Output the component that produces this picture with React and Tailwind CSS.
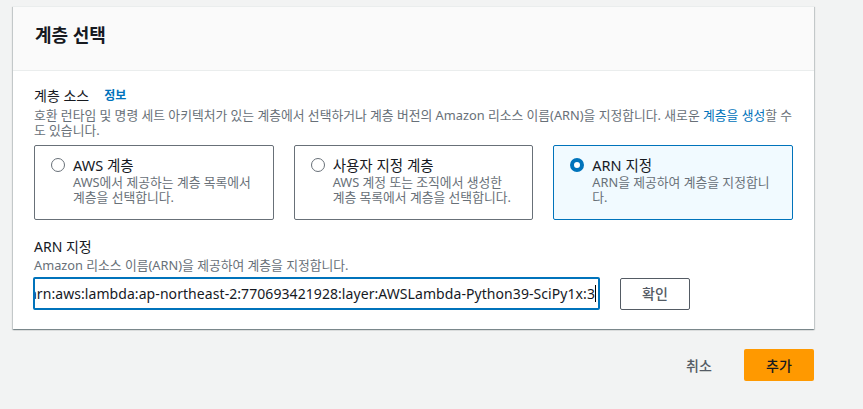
import React from 'react';

const font = { fontFamily: '"Noto Sans", "Noto Sans CJK KR", sans-serif' };

const sources = [
  { id: 'aws', title: 'AWS 계층', lines: ['AWS에서 제공하는 계층 목록에서', '계층을 선택합니다.'] },
  { id: 'custom', title: '사용자 지정 계층', lines: ['AWS 계정 또는 조직에서 생성한', '계층 목록에서 계층을 선택합니다.'] },
  { id: 'arn', title: 'ARN 지정', lines: ['ARN을 제공하여 계층을 지정합니', '다.'] },
];

function Radio({ checked }) {
  return checked ? (
    <span className="mt-[3px] block w-[14px] h-[14px] shrink-0 rounded-full border-[4px] border-[#0073bb] bg-white" />
  ) : (
    <span className="mt-[3px] block w-[14px] h-[14px] shrink-0 rounded-full border-[1.5px] border-[#687078] bg-white" />
  );
}

function SourceCard({ source, selected }) {
  return (
    <div
      className={`flex gap-[8px] pl-[16px] pr-[12px] pt-[9px] pb-[14px] rounded-[2px] border ${
        selected ? 'border-[#0073bb] bg-[#f1faff]' : 'border-[#687078] bg-white'
      }`}
    >
      <Radio checked={selected} />
      <div>
        <div className="h-[20px] text-[14.5px] leading-[20px] text-[#16191f] whitespace-nowrap">{source.title}</div>
        {source.lines.map((line) => (
          <div key={line} className="h-[15px] text-[12.8px] leading-[15px] text-[#687078] whitespace-nowrap">
            {line}
          </div>
        ))}
      </div>
    </div>
  );
}

export default function App() {
  const arn = 'arn:aws:lambda:ap-northeast-2:770693421928:layer:AWSLambda-Python39-SciPy1x:3';

  return (
    <div className="min-h-[409px] bg-[#f2f3f3] pt-[6px] pl-[13px]" style={font}>
      <div className="w-[801px] bg-white border-t border-[#eaeded] shadow-[0_1px_1px_0_rgba(0,28,36,0.3),1px_1px_1px_0_rgba(0,28,36,0.15),-1px_1px_1px_0_rgba(0,28,36,0.15)]">
        <div className="h-[64px] bg-[#fafafa] border-b border-[#eaeded] px-[22px] pt-[16px]">
          <h2 className="text-[18px] leading-[24px] font-bold text-[#16191f]">계층 선택</h2>
        </div>

        <div className="px-[21px] pt-[15px] pb-[19px]">
          <div className="h-[20px] flex items-center gap-[15px] text-[14px] leading-[20px] text-[#16191f]">
            계층 소스
            <span className="text-[12px] font-bold text-[#0073bb]">정보</span>
          </div>
          <div className="mt-[2px] text-[12.8px] leading-[15px] text-[#687078] whitespace-nowrap">
            <div className="h-[15px]">
              호환 런타임 및 명령 세트 아키텍처가 있는 계층에서 선택하거나 계층 버전의 Amazon 리소스 이름(ARN)을 지정합니다. 새로운{' '}
              <span className="text-[#0073bb]">계층을 생성</span>할 수
            </div>
            <div className="h-[15px]">도 있습니다.</div>
          </div>

          <div className="grid grid-cols-3 gap-[20px] mt-[7px]">
            {sources.map((s) => (
              <SourceCard key={s.id} source={s} selected={s.id === 'arn'} />
            ))}
          </div>

          <div className="mt-[17px] h-[20px] text-[14px] leading-[20px] text-[#16191f]">ARN 지정</div>
          <div className="mt-[1px] h-[15px] text-[12.8px] leading-[15px] text-[#687078]">
            Amazon 리소스 이름(ARN)을 제공하여 계층을 지정합니다.
          </div>

          <div className="flex items-center gap-[20px] mt-[4px] -ml-px">
            <div className="w-[567px] h-[33px] flex items-center justify-end overflow-hidden border-2 border-[#0073bb] rounded-[2px] pr-[2px] bg-white">
              <span className="whitespace-nowrap text-[14px] tracking-[0.07px] text-[#16191f]">{arn}</span>
              <span className="block w-px h-[17px] bg-black shrink-0" />
            </div>
            <button className="w-[70px] h-[32px] border border-[#545b64] rounded-[2px] text-[14px] font-medium text-[#545b64] bg-white">
              확인
            </button>
          </div>
        </div>
      </div>

      <div className="w-[801px] flex justify-end items-center mt-[20px] gap-[10px]">
        <button className="w-[70px] h-[32px] text-[14px] font-medium text-[#545b64]">취소</button>
        <button className="w-[70px] h-[32px] bg-[#ff9900] rounded-[2px] text-[14px] font-medium text-[#16191f]">
          추가
        </button>
      </div>
    </div>
  );
}
